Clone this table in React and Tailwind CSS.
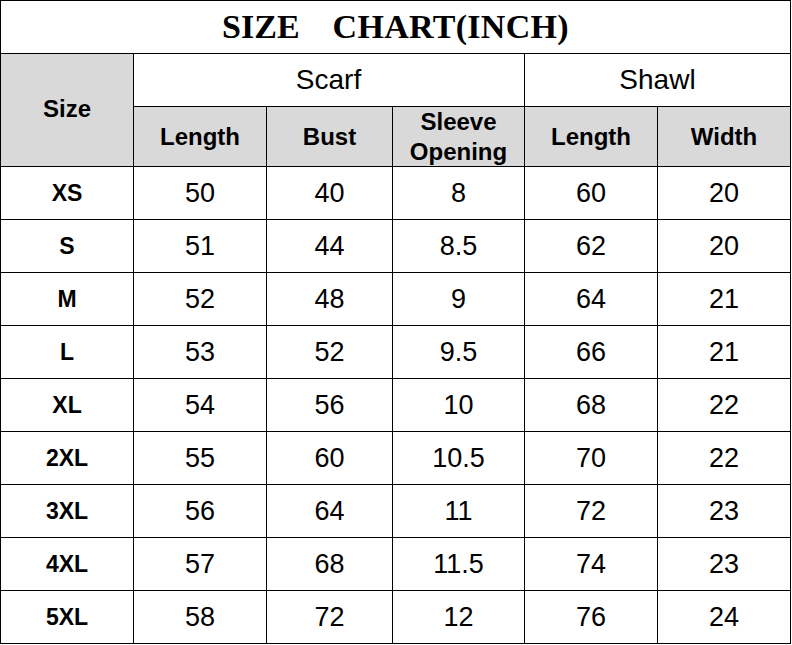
const rows = [
  ["XS", "50", "40", "8", "60", "20"],
  ["S", "51", "44", "8.5", "62", "20"],
  ["M", "52", "48", "9", "64", "21"],
  ["L", "53", "52", "9.5", "66", "21"],
  ["XL", "54", "56", "10", "68", "22"],
  ["2XL", "55", "60", "10.5", "70", "22"],
  ["3XL", "56", "64", "11", "72", "23"],
  ["4XL", "57", "68", "11.5", "74", "23"],
  ["5XL", "58", "72", "12", "76", "24"],
];

const cell = "flex items-center justify-center text-center";

export default function App() {
  return (
    <div className="w-[792px] h-[645px] bg-white text-black font-['Liberation_Sans',Arial,sans-serif]">
      <div className="grid w-[791px] gap-px bg-black p-px grid-cols-[132px_132px_125px_131px_132px_132px] grid-rows-[52px_52px_59px_repeat(9,52px)]">
        {/* Title */}
        <div className={`${cell} col-span-6 bg-white font-['Liberation_Serif','Times_New_Roman',serif] font-bold text-[34px] pb-[1px]`}>
          <span>SIZE</span>
          <span className="ml-[33px] tracking-[0.3px]">CHART(INCH)</span>
        </div>

        {/* Header */}
        <div className={`${cell} row-span-2 bg-[#d9d9d9] font-bold text-[24px] pb-[3px]`}>Size</div>
        <div className={`${cell} col-span-3 bg-white text-[28px] pr-[1px]`}>Scarf</div>
        <div className={`${cell} col-span-2 bg-white text-[28px]`}>Shawl</div>
        <div className={`${cell} bg-[#d9d9d9] font-bold text-[24px]`}>Length</div>
        <div className={`${cell} bg-[#d9d9d9] font-bold text-[24px]`}>Bust</div>
        <div className={`${cell} bg-[#d9d9d9] font-bold text-[24px] leading-[30px]`}>
          Sleeve<br />Opening
        </div>
        <div className={`${cell} bg-[#d9d9d9] font-bold text-[24px]`}>Length</div>
        <div className={`${cell} bg-[#d9d9d9] font-bold text-[24px]`}>Width</div>

        {/* Data */}
        {rows.map((r) =>
          r.map((v, i) => (
            <div
              key={r[0] + i}
              className={`${cell} bg-white ${i === 0 ? "font-bold text-[23px]" : "text-[27px]"}`}
            >
              {v}
            </div>
          ))
        )}
      </div>
    </div>
  );
}
